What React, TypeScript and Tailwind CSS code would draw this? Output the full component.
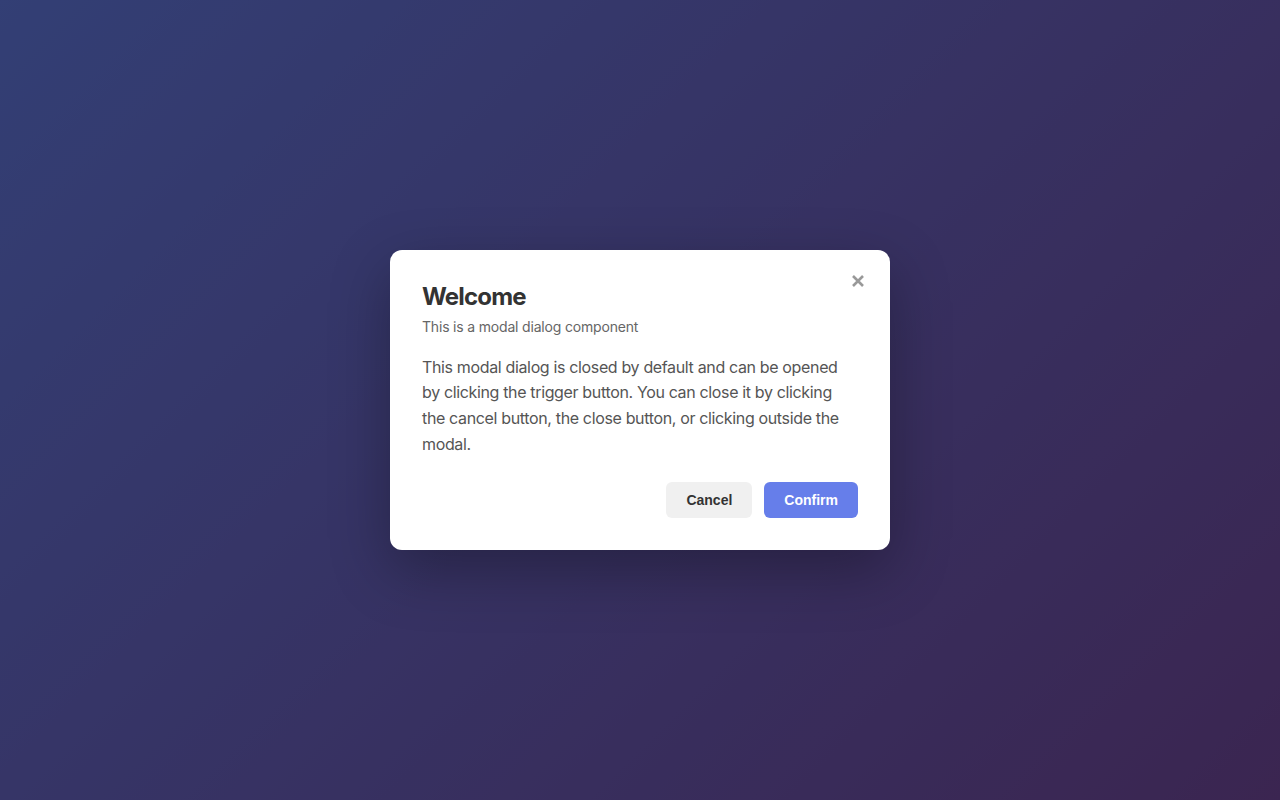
import React from "react";

export default function App() {
  return (
    <div className="relative h-screen w-full bg-[linear-gradient(135deg,#667eea_0%,#764ba2_100%)] font-['Inter','Noto_Sans',sans-serif]">
      <div className="absolute inset-0 flex items-center justify-center bg-black/50">
        <div className="relative w-[500px] rounded-xl bg-white p-8 shadow-[0_20px_60px_rgba(0,0,0,0.3)]">
          <button className="absolute right-4 top-[15px] flex h-8 w-8 items-center justify-center text-[#999]">
            <svg width="14" height="14" viewBox="0 0 14 14">
              <path d="M2 2L12 12M12 2L2 12" stroke="currentColor" strokeWidth="2.6" strokeLinecap="butt" />
            </svg>
          </button>
          <div className="mb-5">
            <h2 className="mb-[7px] text-2xl font-bold leading-[29px] tracking-[-0.035em] text-[#333]">Welcome</h2>
            <p className="text-sm leading-[17px] tracking-[-0.013em] text-[#666]">This is a modal dialog component</p>
          </div>
          <p className="text-base leading-[1.6] tracking-[-0.022em] text-[#555]">
            This modal dialog is closed by default and can be opened by clicking the trigger button. You can close it by clicking the cancel button, the close button, or clicking outside the modal.
          </p>
          <div className="mt-[25px] flex justify-end gap-3">
            <button className="h-9 rounded-md bg-[#f0f0f0] px-5 font-['Liberation_Sans',Arial,sans-serif] text-sm font-bold text-[#333]">
              Cancel
            </button>
            <button className="h-9 rounded-md bg-[#667eea] px-5 font-['Liberation_Sans',Arial,sans-serif] text-sm font-bold text-white">
              Confirm
            </button>
          </div>
        </div>
      </div>
    </div>
  );
}
